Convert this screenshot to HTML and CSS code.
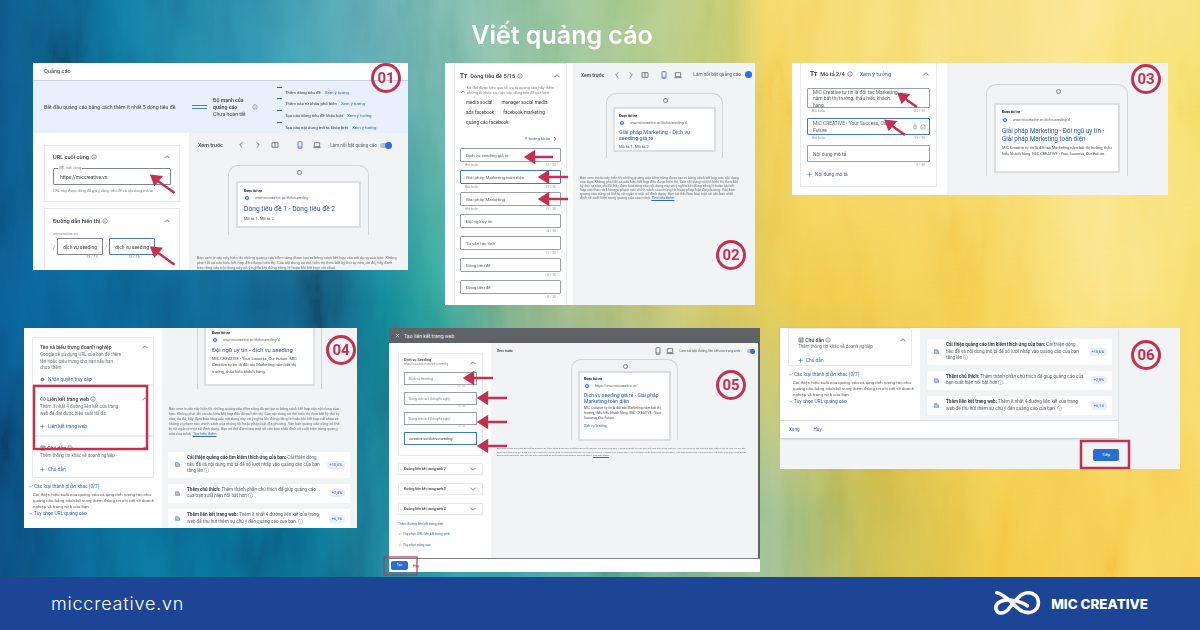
FILE: index.html
```html
<!DOCTYPE html>
<html lang="vi">
<head>
    <meta charset="UTF-8">
    <meta name="viewport" content="width=device-width, initial-scale=1.0">
    <title>Viết quảng cáo</title>
    <link rel="stylesheet" href="styles.css">
</head>
<body>
    <!-- icon sprite -->
    <svg class="sprite" aria-hidden="true">
        <symbol id="up" viewBox="0 0 12 12"><path d="M2 8l4-4 4 4" fill="none" stroke="currentColor" stroke-width="1.2"/></symbol>
        <symbol id="down" viewBox="0 0 12 12"><path d="M2 4l4 4 4-4" fill="none" stroke="currentColor" stroke-width="1.2"/></symbol>
        <symbol id="left" viewBox="0 0 12 12"><path d="M8 2L4 6l4 4" fill="none" stroke="currentColor" stroke-width="1.2"/></symbol>
        <symbol id="right" viewBox="0 0 12 12"><path d="M4 2l4 4-4 4" fill="none" stroke="currentColor" stroke-width="1.2"/></symbol>
        <symbol id="split" viewBox="0 0 12 12"><path d="M1.5 2.5h9v7h-9zM6 2.5v7" fill="none" stroke="currentColor" stroke-width="1.2"/></symbol>
        <symbol id="phone" viewBox="0 0 12 12"><rect x="3" y="1" width="6" height="10" rx="1" fill="none" stroke="currentColor" stroke-width="1.2"/><path d="M3 9h6" stroke="currentColor"/></symbol>
        <symbol id="laptop" viewBox="0 0 12 12"><path d="M2 2.5h8v6H2zM.5 10h11" fill="none" stroke="currentColor" stroke-width="1.2"/></symbol>
        <symbol id="info" viewBox="0 0 12 12"><circle cx="6" cy="6" r="4.5" fill="none" stroke="currentColor"/><path d="M6 5.500v3M6 3.500v1" stroke="currentColor"/></symbol>
        <symbol id="plus" viewBox="0 0 12 12"><path d="M6 1v10M1 6h10" stroke="currentColor" stroke-width="1.400"/></symbol>
        <symbol id="globe" viewBox="0 0 12 12"><circle cx="6" cy="6" r="5.500" fill="#d2e3fc"/><circle cx="6" cy="6" r="3" fill="none" stroke="#1a56b8" stroke-width="1.600"/></symbol>
        <symbol id="doc" viewBox="0 0 12 12"><path d="M2 2h8v8H2z" fill="none" stroke="currentColor" stroke-width="1.200"/><path d="M3.500 4.500h5M3.500 6.500h5M3.500 8.500h3" stroke="currentColor"/></symbol>
        <symbol id="mark" viewBox="0 0 12 12"><path d="M2 2h5l3 3v5H2z" fill="#7a9bd4"/><path d="M3.500 5h4M3.500 7h5" stroke="#fff"/></symbol>
        <symbol id="link" viewBox="0 0 12 12"><path d="M5 3.500H3a2.500 2.500 0 000 5h2M7 3.500h2a2.500 2.500 0 010 5H7M4 6h4" fill="none" stroke="currentColor" stroke-width="1.200"/></symbol>
        <symbol id="clip" viewBox="0 0 12 12"><path d="M4 2h4v8H4z" fill="none" stroke="currentColor"/></symbol>
    </svg>

    <div class="poster">
        <!-- watercolor grain over the gradients -->
        <svg class="wash" aria-hidden="true">
            <filter id="grain" x="0" y="0" width="100%" height="100%">
                <feTurbulence type="fractalNoise" baseFrequency="0.02 0.006" numOctaves="5" seed="11"/>
                <feColorMatrix values="1.6 0 0 0 -0.3  1.6 0 0 0 -0.3  1.6 0 0 0 -0.3  0 0 0 0 1"/>
            </filter>
            <rect width="1200" height="630" filter="url(#grain)"/>
        </svg>

        <h1 class="poster-title">Viết quảng cáo</h1>

        <div class="row row-top">
            <!-- 01 -->
            <section class="panel p1">
                <div class="p1-head">Quảng cáo</div>
                <div class="p1-band">
                    <div class="band-text">Bắt đầu quảng cáo bằng cách thêm ít nhất 5 dòng tiêu đề</div>
                    <div class="gauge"><i></i><i></i></div>
                    <div class="band-strength"><b>Độ mạnh của quảng cáo</b>Chưa hoàn tất</div>
                    <svg class="ic info-ic"><use href="#info"/></svg>
                    <ul class="band-tips">
                        <li>Thêm dòng tiêu đề <a>Xem ý tưởng</a></li>
                        <li>Thêm các từ khóa phổ biến <a>Xem ý tưởng</a></li>
                        <li>Tạo các dòng tiêu đề khác biệt <a>Xem ý tưởng</a></li>
                        <li>Tạo các nội dung mô tả khác biệt <a>Xem ý tưởng</a></li>
                    </ul>
                </div>
                <div class="split p1-split">
                    <div class="col-left">
                        <div class="card p1-url">
                            <div class="card-title">URL cuối cùng <svg class="ic"><use href="#info"/></svg><svg class="ic chev"><use href="#up"/></svg></div>
                            <div class="field field-legend"><span class="legend">URL cuối cùng</span>https://miccreative.vn</div>
                            <div class="hint">URL này được dùng để gợi ý dòng tiêu đề và nội dung mô tả</div>
                        </div>
                        <div class="card p1-path">
                            <div class="card-title">Đường dẫn hiển thị <svg class="ic"><use href="#info"/></svg><svg class="ic chev"><use href="#up"/></svg></div>
                            <div class="hint">miccreative.vn</div>
                            <div class="path-row">
                                <span>/</span><div class="field">dịch vụ seeding</div>
                                <span>/</span><div class="field field-on">dịch vụ seeding</div>
                            </div>
                            <div class="path-count"><span>13 / 15</span><span>13 / 15</span></div>
                        </div>
                    </div>
                    <div class="col-right">
                        <div class="toolbar">
                            <b>Xem trước</b>
                            <svg class="ic-lg"><use href="#left"/></svg>
                            <svg class="ic-lg"><use href="#right"/></svg>
                            <svg class="ic-lg"><use href="#split"/></svg>
                            <svg class="ic-lg blue"><use href="#phone"/></svg>
                            <svg class="ic-lg"><use href="#laptop"/></svg>
                            <span class="toolbar-label">Làm nổi bật quảng cáo</span>
                            <span class="toggle"></span>
                        </div>
                        <div class="phone p1-phone">
                            <div class="ad">
                                <div class="ad-sponsor">Được tài trợ</div>
                                <div class="ad-url"><svg class="ad-globe"><use href="#globe"/></svg>www.miccreative.vn/dichvuseeding</div>
                                <div class="ad-title">Dòng tiêu đề 1 - Dòng tiêu đề 2</div>
                                <div class="ad-desc">Mô tả 1. Mô tả 2.</div>
                            </div>
                        </div>
                        <p class="fine p1-fine">Bản xem trước này hiển thị những quảng cáo tiềm năng được tạo ra bằng cách kết hợp các nội dung của bạn. Không phải tất cả các kiểu kết hợp đều được hiển thị. Các nội dung có thể hiển thị theo bất kỳ thứ tự nào, do đó, hãy đảm bảo rằng các nội dung này có ý nghĩa khi đứng riêng lẻ hoặc khi kết hợp với nhau.</p>
                    </div>
                </div>
                <div class="badge badge-01">01</div>
                <svg class="marks" viewBox="0 0 376 207">
                    <path d="M142 130L121 115M119 113l9 1-6 7z"/>
                    <path d="M142 202L121 187M119 185l9 1-6 7z"/>
                </svg>
            </section>

            <!-- 02 -->
            <section class="panel p2">
                <div class="split p2-split">
                    <div class="col-left">
                        <div class="card p2-card">
                            <div class="card-title"><span class="tt">Tт</span> Dòng tiêu đề 5/15 <svg class="ic"><use href="#info"/></svg><svg class="ic chev"><use href="#up"/></svg></div>
                            <div class="hint p2-hint"><svg class="ic"><use href="#up"/></svg><span>Để đạt được hiệu quả tối ưu từ quảng cáo, hãy thêm những từ khóa sau vào các dòng tiêu đề của bạn</span></div>
                            <div class="chips">
                                <span>media social</span><span>manager social media</span>
                                <span>ads facebook</span><span>facebook marketing</span>
                                <span>quảng cáo facebook</span>
                            </div>
                            <div class="more">Ý tưởng khác <svg class="ic"><use href="#right"/></svg></div>
                            <div class="inp">Dịch vụ seeding giá rẻ</div>
                            <div class="inp-meta"><span>Bắt buộc</span><span>22 / 30</span></div>
                            <div class="inp inp-on">Giải pháp Marketing toàn diện</div>
                            <div class="inp-meta"><span>Bắt buộc</span><span>29 / 30</span></div>
                            <div class="inp">Giải pháp Marketing</div>
                            <div class="inp-meta"><span>Bắt buộc</span><span>19 / 30</span></div>
                            <div class="inp">Đội ngũ uy tín</div>
                            <div class="inp-meta"><span></span><span>14 / 30</span></div>
                            <div class="inp">Tư vấn tận tình</div>
                            <div class="inp-meta"><span></span><span>15 / 30</span></div>
                            <div class="inp">Dòng tiêu đề</div>
                            <div class="inp-meta"><span></span><span>0 / 30</span></div>
                            <div class="inp">Dòng tiêu đề</div>
                            <div class="inp-meta"><span></span><span>0 / 30</span></div>
                        </div>
                    </div>
                    <div class="col-right">
                        <div class="toolbar p2-toolbar">
                            <b>Xem trước</b>
                            <svg class="ic-lg"><use href="#left"/></svg>
                            <svg class="ic-lg"><use href="#right"/></svg>
                            <svg class="ic-lg"><use href="#split"/></svg>
                            <svg class="ic-lg blue"><use href="#phone"/></svg>
                            <svg class="ic-lg"><use href="#laptop"/></svg>
                            <span class="toolbar-label">Làm nổi bật quảng cáo</span>
                            <span class="toggle"></span>
                        </div>
                        <div class="phone p2-phone">
                            <div class="ad">
                                <div class="ad-sponsor">Được tài trợ</div>
                                <div class="ad-url"><svg class="ad-globe"><use href="#globe"/></svg>www.miccreative.vn/dichvuseeding/d</div>
                                <div class="ad-title">Giải pháp Marketing - Dịch vụ seeding giá rẻ</div>
                                <div class="ad-desc">Mô tả 1. Mô tả 2.</div>
                            </div>
                        </div>
                        <p class="fine p2-fine">Bản xem trước này hiển thị những quảng cáo tiềm năng được tạo ra bằng cách kết hợp các nội dung của bạn. Không phải tất cả các kiểu kết hợp đều được hiển thị. Các nội dung có thể hiển thị theo bất kỳ thứ tự nào, do đó, hãy đảm bảo rằng các nội dung này có ý nghĩa khi đứng riêng lẻ hoặc khi kết hợp với nhau và không vi phạm các chính sách của chúng tôi hoặc pháp luật địa phương. Văn bản quảng cáo cũng có thể bị rút ngắn ở một số định dạng. Bạn có thể đảm bảo một số văn bản nhất định sẽ xuất hiện trong quảng cáo của mình. <a>Tìm hiểu thêm</a></p>
                    </div>
                </div>
                <div class="badge badge-02">02</div>
                <svg class="marks" viewBox="0 0 310 242">
                    <path d="M108 94H84M81 94l8-5v10z"/>
                    <path d="M123 114H98M95 114l8-5v10z"/>
                    <path d="M123 136H98M95 136l8-5v10z"/>
                </svg>
            </section>

            <!-- 03 -->
            <section class="panel p3">
                <div class="split p3-split">
                    <div class="col-left">
                        <div class="card p3-card">
                            <div class="card-title"><span class="tt">Tт</span> Mô tả 2/4 <svg class="ic"><use href="#info"/></svg> <a>Xem ý tưởng</a><svg class="ic chev"><use href="#up"/></svg></div>
                            <div class="inp inp-tall">MIC Creative tự tin là đối tác Marketing nắm bắt thị trường, thấu hiểu khách hàng.</div>
                            <div class="inp-meta"><span>Bắt buộc</span><span>80 / 90</span></div>
                            <div class="inp inp-on inp-wrap"><span class="inp-text">MIC CREATIVE - Your Success, Our Future</span><span class="inp-icons"><svg class="ic"><use href="#clip"/></svg><svg class="ic"><use href="#info"/></svg></span></div>
                            <div class="inp-meta"><span>Bắt buộc</span><span>39 / 90</span></div>
                            <div class="inp inp-empty">Nội dung mô tả</div>
                            <div class="inp-meta"><span></span><span>0 / 90</span></div>
                            <div class="add"><svg class="ic"><use href="#plus"/></svg> Nội dung mô tả</div>
                        </div>
                    </div>
                    <div class="col-right">
                        <div class="phone p3-phone">
                            <div class="ad">
                                <div class="ad-sponsor">Được tài trợ</div>
                                <div class="ad-url"><svg class="ad-globe"><use href="#globe"/></svg>www.miccreative.vn/dichvuseeding/d</div>
                                <div class="ad-title">Giải pháp Marketing - Đội ngũ uy tín - Giải pháp Marketing toàn diện</div>
                                <div class="ad-desc">MIC Creative tự tin là đối tác Marketing nắm bắt thị trường, thấu hiểu khách hàng. MIC CREATIVE - Your Success, Our Future.</div>
                            </div>
                        </div>
                    </div>
                </div>
                <div class="badge badge-03">03</div>
                <svg class="marks" viewBox="0 0 376 132">
                    <path d="M125 44L109 33M107 31l9 1-6 7z"/>
                    <path d="M113 72L96 60M94 58l9 1-6 7z"/>
                </svg>
            </section>
        </div>

        <div class="row row-bottom">
            <!-- 04 -->
            <section class="panel p4">
                <div class="split p4-split">
                    <div class="col-left">
                        <div class="card p4-card">
                            <div class="stack-title"><b>Tên và biểu trưng doanh nghiệp</b><svg class="ic chev"><use href="#up"/></svg></div>
                            <div class="stack-text">Google sẽ sử dụng URL của bạn để thêm tên hoặc biểu trưng cho bạn nếu bạn chưa thêm</div>
                            <div class="add add-access"><svg class="ic"><use href="#globe"/></svg> Nhận quyền truy cập</div>
                        </div>
                        <div class="card p4-card">
                            <div class="stack-title"><b><svg class="ic"><use href="#link"/></svg> Liên kết trang web <svg class="ic"><use href="#info"/></svg></b><svg class="ic chev"><use href="#up"/></svg></div>
                            <div class="stack-text">Thêm ít nhất 4 đường liên kết của trang web để đạt được hiệu suất tối đa</div>
                            <div class="add"><svg class="ic"><use href="#plus"/></svg> Liên kết trang web</div>
                        </div>
                        <div class="card p4-card">
                            <div class="stack-title"><b><svg class="ic"><use href="#doc"/></svg> Chú dẫn <svg class="ic"><use href="#info"/></svg></b><svg class="ic chev"><use href="#up"/></svg></div>
                            <div class="stack-text">Thêm thông tin khác về doanh nghiệp</div>
                            <div class="add"><svg class="ic"><use href="#plus"/></svg> Chú dẫn</div>
                        </div>
                        <div class="more-block">
                            <a class="more-link"><svg class="ic"><use href="#down"/></svg>Các loại thành phần khác (0/7)</a>
                            <p>Cải thiện hiệu suất của quảng cáo và tăng tính tương tác cho quảng cáo bằng cách bổ sung thêm thông tin chi tiết về doanh nghiệp và trang web của bạn</p>
                            <a class="more-link"><svg class="ic"><use href="#down"/></svg>Tùy chọn URL quảng cáo</a>
                        </div>
                    </div>
                    <div class="col-right">
                        <div class="phone phone-cut p4-phone">
                            <div class="ad">
                                <div class="ad-sponsor">Được tài trợ</div>
                                <div class="ad-url"><svg class="ad-globe"><use href="#globe"/></svg>www.miccreative.vn/dichvuseeding/d</div>
                                <div class="ad-title">Đội ngũ uy tín - dịch vụ seeding</div>
                                <div class="ad-desc">MIC CREATIVE - Your Success, Our Future. MIC Creative tự tin là đối tác Marketing nắm bắt thị trường, thấu hiểu khách hàng.</div>
                            </div>
                        </div>
                        <p class="fine p4-fine">Bản xem trước này hiển thị những quảng cáo tiềm năng được tạo ra bằng cách kết hợp các nội dung của bạn. Không phải tất cả các kiểu kết hợp đều được hiển thị. Các nội dung có thể hiển thị theo bất kỳ thứ tự nào, do đó, hãy đảm bảo rằng các nội dung này có ý nghĩa khi đứng riêng lẻ hoặc khi kết hợp với nhau và không vi phạm các chính sách của chúng tôi hoặc pháp luật địa phương. Văn bản quảng cáo cũng có thể bị rút ngắn ở một số định dạng. Bạn có thể đảm bảo một số văn bản nhất định sẽ xuất hiện trong quảng cáo của mình. <a>Tìm hiểu thêm</a></p>
                        <div class="tips p4-tips">
                            <div class="tip"><svg class="ic"><use href="#mark"/></svg><div><b>Cải thiện quảng cáo tìm kiếm thích ứng của bạn:</b> Cải thiện dòng tiêu đề và nội dung mô tả để số lượt nhấp vào quảng cáo của bạn tăng lên ⓘ</div><span class="pill">+10,6%</span></div>
                            <div class="tip"><svg class="ic"><use href="#mark"/></svg><div><b>Thêm chú thích:</b> Thêm thành phần chú thích để giúp quảng cáo của bạn xuất hiện nổi bật hơn ⓘ</div><span class="pill">+2,8%</span></div>
                            <div class="tip"><svg class="ic"><use href="#mark"/></svg><div><b>Thêm liên kết trang web:</b> Thêm ít nhất 4 đường liên kết của trang web để thu hút thêm sự chú ý đến quảng cáo của bạn. ⓘ</div><span class="pill">+6,1%</span></div>
                        </div>
                    </div>
                </div>
                <div class="badge badge-04">04</div>
                <svg class="marks" viewBox="0 0 333 200">
                    <rect x="10" y="58" width="113" height="63"/>
                </svg>
            </section>

            <!-- 05 -->
            <section class="panel p5">
                <div class="p5-head"><svg class="ic"><use href="#plus"/></svg>Tạo liên kết trang web</div>
                <div class="split p5-split">
                    <div class="col-left">
                        <div class="card p5-card">
                            <div class="p5-card-title"><b>Dịch vụ Seeding</b>https://miccreative.vn/dich-vu-seeding<svg class="ic chev"><use href="#up"/></svg></div>
                            <div class="p5-inp">Dịch vụ Seeding</div><div class="p5-count">15 / 25</div>
                            <div class="p5-inp">Dòng mô tả 1 (khuyến nghị)</div><div class="p5-count">0 / 35</div>
                            <div class="p5-inp">Dòng mô tả 2 (khuyến nghị)</div><div class="p5-count">0 / 35</div>
                            <div class="p5-inp p5-inp-on">ccreative.vn/dich-vu-seeding/</div>
                        </div>
                        <div class="card p5-fold"><b>Đường liên kết trang web 2</b><svg class="ic chev"><use href="#down"/></svg></div>
                        <div class="card p5-fold"><b>Đường liên kết trang web 3</b><svg class="ic chev"><use href="#down"/></svg></div>
                        <div class="card p5-fold"><b>Đường liên kết trang web 4</b><svg class="ic chev"><use href="#down"/></svg></div>
                        <div class="p5-links">
                            <a>Thêm đường liên kết trang web</a>
                            <a><svg class="ic"><use href="#down"/></svg>Tùy chọn URL liên kết trang web</a>
                            <a><svg class="ic"><use href="#down"/></svg>Tùy chọn nâng cao</a>
                        </div>
                    </div>
                    <div class="col-right">
                        <div class="toolbar p5-toolbar">
                            <b>Xem trước</b>
                            <svg class="ic-lg"><use href="#phone"/></svg>
                            <svg class="ic-lg"><use href="#laptop"/></svg>
                            <span class="toolbar-label">Làm nổi bật đường liên kết của trang web</span>
                            <span class="toggle"></span>
                        </div>
                        <div class="phone p5-phone">
                            <div class="ad">
                                <div class="ad-sponsor">Được tài trợ</div>
                                <div class="ad-url"><svg class="ad-globe"><use href="#globe"/></svg>https://www.miccreative.vn/</div>
                                <div class="ad-title">Dịch vụ seeding giá rẻ - Giải pháp Marketing toàn diện</div>
                                <div class="ad-desc">MIC Creative tự tin là đối tác Marketing nắm bắt thị trường, thấu hiểu khách hàng. MIC CREATIVE - Your Success, Our Future.</div>
                                <div class="ad-site">Dịch vụ Seeding</div>
                            </div>
                        </div>
                        <p class="fine p5-fine">Bản xem trước này hiển thị những quảng cáo tiềm năng được tạo ra bằng cách kết hợp các nội dung của bạn. Không phải tất cả các kiểu kết hợp đều được hiển thị. Các nội dung có thể hiển thị theo bất kỳ thứ tự nào, do đó, hãy đảm bảo rằng các nội dung này có ý nghĩa khi đứng riêng lẻ hoặc khi kết hợp với nhau và không vi phạm các chính sách của chúng tôi hoặc pháp luật địa phương. Văn bản quảng cáo cũng có thể bị rút ngắn ở một số định dạng. Bạn có thể đảm bảo một số văn bản nhất định sẽ xuất hiện trong quảng cáo của mình. <a>Tìm hiểu thêm</a></p>
                    </div>
                </div>
                <div class="p5-foot"><span class="btn btn-small">Tạo</span><span class="p5-cancel">Hủy</span></div>
                <div class="badge badge-05">05</div>
                <svg class="marks" viewBox="0 0 371 244">
                    <path d="M104 50H79M76 50l8-5v10z"/>
                    <path d="M118 70H93M90 70l8-5v10z"/>
                    <path d="M118 94H93M90 94l8-5v10z"/>
                    <path d="M118 118H93M90 118l8-5v10z"/>
                    <rect class="thin" x="-5" y="229" width="33" height="18"/>
                </svg>
            </section>

            <!-- 06 -->
            <section class="panel p6">
                <div class="p6-sheet">
                    <div class="split p6-split">
                        <div class="col-left">
                            <div class="card p6-card">
                                <div class="stack-title"><b><svg class="ic"><use href="#doc"/></svg> Chú dẫn <svg class="ic"><use href="#info"/></svg></b><svg class="ic chev"><use href="#up"/></svg></div>
                                <div class="stack-text">Thêm thông tin khác về doanh nghiệp</div>
                                <div class="add"><svg class="ic"><use href="#plus"/></svg> Chú dẫn</div>
                            </div>
                            <div class="more-block">
                                <a class="more-link"><svg class="ic"><use href="#down"/></svg>Các loại thành phần khác (0/7)</a>
                                <p>Cải thiện hiệu suất của quảng cáo và tăng tính tương tác cho quảng cáo bằng cách bổ sung thêm thông tin chi tiết về doanh nghiệp và trang web của bạn</p>
                                <a class="more-link"><svg class="ic"><use href="#down"/></svg>Tùy chọn URL quảng cáo</a>
                            </div>
                        </div>
                        <div class="col-right">
                            <div class="tips p6-tips">
                                <div class="tip"><svg class="ic"><use href="#mark"/></svg><div><b>Cải thiện quảng cáo tìm kiếm thích ứng của bạn:</b> Cải thiện dòng tiêu đề và nội dung mô tả để số lượt nhấp vào quảng cáo của bạn tăng lên ⓘ</div><span class="pill">+10,6%</span></div>
                                <div class="tip"><svg class="ic"><use href="#mark"/></svg><div><b>Thêm chú thích:</b> Thêm thành phần chú thích để giúp quảng cáo của bạn xuất hiện nổi bật hơn ⓘ</div><span class="pill">+2,8%</span></div>
                                <div class="tip"><svg class="ic"><use href="#mark"/></svg><div><b>Thêm liên kết trang web:</b> Thêm ít nhất 4 đường liên kết của trang web để thu hút thêm sự chú ý đến quảng cáo của bạn. ⓘ</div><span class="pill">+6,1%</span></div>
                            </div>
                        </div>
                    </div>
                    <div class="p6-foot"><a>Xong</a><a>Hủy</a></div>
                </div>
                <div class="p6-next"><span class="btn">Tiếp</span></div>
                <div class="badge badge-06">06</div>
                <svg class="marks" viewBox="0 0 400 141">
                    <rect x="301" y="113" width="48" height="27"/>
                </svg>
            </section>
        </div>

        <footer class="brand-bar">
            <span class="site">miccreative.vn</span>
            <div class="brand">
                <svg class="brand-logo" viewBox="38 24 148 82">
                    <path d="M50 32C78 38 96 66 120 84C146 102 178 92 178 62C178 36 150 26 130 36C110 46 100 68 84 84C72 96 52 100 47 82C43 64 66 52 90 54C110 56 130 62 144 72" fill="none" stroke="#fff" stroke-width="11" stroke-linecap="round"/>
                </svg>
                <span class="brand-name">MIC CREATIVE</span>
            </div>
        </footer>
    </div>
</body>
</html>
```

FILE: styles.css
```css
* {
    box-sizing: border-box;
}
html, body {
    margin: 0;
    padding: 0;
}
body {
    width: 1200px;
    height: 630px;
    overflow: hidden;
    font-family: Roboto, "Noto Sans", sans-serif;
    color: #3c4043;
}
.sprite {
    display: none;
}
a {
    color: #3367b8;
}

/* poster background: one wash across the middle, faded top and bottom washes */
.poster {
    position: relative;
    width: 1200px;
    height: 630px;
    display: flex;
    flex-direction: column;
    background: linear-gradient(90deg, #0a5a8f 0%, #0c5f90 10%, #155f85 27%, #107a8a 32%, #2a9a92 36%, #8ab488 43%, #c6c470 55%, #f0c948 67%, #f5cf4f 80%, #fbe37c 92%, #f8dc6a 100%);
}
.poster::before,
.poster::after {
    content: "";
    position: absolute;
    left: 0;
    width: 1200px;
    height: 300px;
}
.poster::before {
    top: 0;
    background: linear-gradient(90deg, #0d4f7d 0%, #0e6f97 9%, #2d8aa8 21%, #5aa5b0 30%, #7fbcaa 39%, #9cc48d 50%, #c8cc70 61%, #f6d765 64%, #f8df7c 83%, #fbe68a 92%, #f6e070 100%);
    -webkit-mask-image: linear-gradient(180deg, #000 25%, transparent 100%);
    mask-image: linear-gradient(180deg, #000 25%, transparent 100%);
}
.poster::after {
    top: 300px;
    background: linear-gradient(90deg, #0b4a7b 0%, #0a6a96 9%, #0a6a8c 25%, #3a9aa5 42%, #98bb84 65%, #c8b84a 73%, #f4ca48 83%, #f8d25a 100%);
    -webkit-mask-image: linear-gradient(0deg, #000 30%, transparent 100%);
    mask-image: linear-gradient(0deg, #000 30%, transparent 100%);
}
.poster > * {
    position: relative;
    z-index: 1;
}
.poster > .wash {
    position: absolute;
    left: 0;
    top: 0;
    width: 1200px;
    height: 630px;
    opacity: 0.18;
    mix-blend-mode: overlay;
}
.poster-title {
    margin: 0;
    height: 63px;
    padding: 19px 76px 0 0;
    text-align: center;
    font-family: Inter, sans-serif;
    font-size: 25px;
    line-height: 32px;
    font-weight: 600;
    color: #fff;
}
.row {
    display: flex;
    align-items: flex-start;
}
.row-top {
    height: 265px;
    padding-left: 33px;
    gap: 37px;
}
.row-bottom {
    height: 249px;
    padding-left: 24px;
}
.panel {
    position: relative;
    flex: none;
    background: #f1f3f4;
    display: flex;
    flex-direction: column;
}
.split {
    display: grid;
    flex: 1;
    min-height: 0;
    overflow: hidden;
    filter: blur(0.3px);
}
.col-left {
    background: #fff;
    min-width: 0;
    overflow: hidden;
}
.col-right {
    background: #f1f3f4;
    min-width: 0;
    overflow: hidden;
}

/* overlays */
.badge {
    position: absolute;
    width: 30px;
    height: 30px;
    border: 3px solid #c4304f;
    border-radius: 50%;
    font-size: 15px;
    line-height: 24px;
    font-weight: 700;
    text-align: center;
    color: #c4304f;
}
.badge-01 { left: 338px; top: 0; }
.badge-02 { left: 271px; top: 177px; }
.badge-03 { left: 339px; top: 1px; }
.badge-04 { left: 302px; top: 7px; }
.badge-05 { left: 327px; top: 42px; }
.badge-06 { left: 351px; top: 12px; }
.marks {
    position: absolute;
    inset: 0;
    width: 100%;
    height: 100%;
    overflow: visible;
    pointer-events: none;
}
.marks path {
    fill: #c4304f;
    stroke: #c4304f;
    stroke-width: 2.4;
}
.marks rect {
    fill: none;
    stroke: #c4304f;
    stroke-width: 2.5;
}
.marks rect.thin {
    stroke-width: 1.2;
}

/* shared bits */
.ic {
    width: 6px;
    height: 6px;
    flex: none;
    vertical-align: -1px;
}
.ic-lg {
    width: 8px;
    height: 8px;
    flex: none;
    color: #5f6368;
}
.blue {
    color: #3367d6;
}
.tt {
    font-size: 6.500px;
    font-weight: 700;
    margin-right: 1px;
}
.card {
    background: #fff;
    border: 1px solid #e8eaed;
    border-radius: 1px;
}
.card-title {
    display: flex;
    align-items: center;
    gap: 2px;
    font-size: 5.600px;
    font-weight: 500;
    color: #3c4043;
}
.card-title a {
    margin-left: 5px;
    font-weight: 400;
}
.chev {
    margin-left: auto;
    width: 8px;
    height: 8px;
    color: #5f6368;
}
.hint {
    font-size: 3.800px;
    line-height: 5px;
    color: #80868b;
}
.toolbar {
    display: flex;
    align-items: center;
    font-size: 4.600px;
    color: #5f6368;
    white-space: nowrap;
}
.toolbar b {
    font-size: 5.400px;
    font-weight: 500;
    color: #3c4043;
}
.toolbar-label {
    margin-left: 7px;
}
.toggle {
    position: relative;
    width: 12px;
    height: 5px;
    margin-left: 3px;
    border-radius: 3px;
    background: #a8c2f0;
}
.toggle::after {
    content: "";
    position: absolute;
    right: 0;
    top: -1px;
    width: 7px;
    height: 7px;
    border-radius: 50%;
    background: #2f6fd8;
}
.phone {
    background: #f1f3f4;
    border: 1.2px solid #d0d3d6;
    border-bottom: 0;
    border-radius: 10px 10px 0 0;
    padding: 14px 7px 0;
    position: relative;
}
.phone::before {
    content: "";
    position: absolute;
    top: 4px;
    left: 50%;
    width: 3px;
    height: 3px;
    margin-left: -1.5px;
    border: 0.6px solid #80868b;
    border-radius: 50%;
}
.phone-cut {
    border-top: 0;
    border-radius: 0;
    padding-top: 0;
}
.phone-cut::before {
    display: none;
}
.ad {
    background: #fff;
    border: 2px solid #dcdee0;
    padding: 6px 6px 4px;
}
.ad-sponsor {
    font-size: 3.400px;
    font-weight: 700;
    color: #202124;
}
.ad-url {
    display: flex;
    align-items: center;
    gap: 5px;
    margin: 2px 0 3px;
    font-size: 3.400px;
    color: #5f6368;
}
.ad-globe {
    width: 6px;
    height: 6px;
    flex: none;
}
.ad-title {
    font-size: 6.400px;
    line-height: 8px;
    color: #2a5aa8;
}
.ad-desc {
    margin-top: 2px;
    font-size: 4.100px;
    line-height: 6.400px;
    color: #4d5156;
}
.ad-site {
    margin-top: 3px;
    font-size: 4px;
    color: #2a5aa8;
}
.fine {
    margin: 0;
    font-size: 3.300px;
    line-height: 4.700px;
    color: #70757a;
}
.fine a {
    text-decoration: underline;
}
.inp {
    height: 14px;
    padding: 0 5px;
    display: flex;
    align-items: center;
    border: 0.8px solid #9aa0a6;
    border-radius: 1px;
    font-size: 4.400px;
    color: #5f6368;
}
.inp-on {
    border-color: #3c7ac9;
}
.inp-meta {
    display: flex;
    justify-content: space-between;
    height: 8px;
    padding: 1px 5px 0;
    font-size: 3.400px;
    color: #9aa0a6;
}
.add {
    display: flex;
    align-items: center;
    gap: 3px;
    font-size: 4.800px;
    color: #3367b8;
}
.add .ic {
    width: 5px;
    height: 5px;
}
.btn {
    display: inline-block;
    background: #2a6dd4;
    border-radius: 2px;
    color: #fff;
    text-align: center;
}

/* stack cards in 04 and 06 */
.stack-title {
    display: flex;
    align-items: center;
    font-size: 5.100px;
    color: #3c4043;
}
.stack-title b {
    font-weight: 500;
}
.stack-text {
    margin-top: 1px;
    padding-right: 27px;
    font-size: 4.500px;
    line-height: 6.700px;
    color: #70757a;
}
.more-block {
    margin: 5px 6px 0 4px;
}
.more-block p {
    margin: 3px 0 2px 5px;
    font-size: 4.400px;
    line-height: 5.800px;
    color: #5f6368;
}
.more-link {
    display: flex;
    align-items: center;
    gap: 1px;
    font-size: 4.800px;
}
.more-link .ic {
    width: 5px;
    height: 5px;
}
.tips {
    display: flex;
    flex-direction: column;
}
.tip {
    display: grid;
    grid-template-columns: 7px 1fr auto;
    gap: 6px;
    align-items: center;
    padding: 3px 5px 3px 6px;
    background: #fff;
    border-radius: 1px;
    font-size: 4.600px;
    line-height: 6.600px;
    color: #5f6368;
}
.tip b {
    font-weight: 700;
    color: #3c4043;
}
.tip .ic {
    width: 7px;
    height: 7px;
}
.pill {
    padding: 1px 3px;
    border-radius: 5px;
    background: #e8f0fe;
    color: #3367b8;
    font-size: 3.900px;
    line-height: 6px;
}

/* 01 */
.p1 {
    width: 375px;
    height: 207px;
    background: #fff;
}
.p1-head {
    height: 18px;
    padding: 0 11px;
    line-height: 17px;
    font-size: 5.600px;
    border-bottom: 1px solid #c9d3e0;
    filter: blur(0.3px);
}
.p1-band {
    height: 52px;
    display: flex;
    align-items: center;
    padding-left: 11px;
    background: #e8f0fb;
    font-size: 5.200px;
    filter: blur(0.3px);
}
.band-text {
    width: 148px;
    white-space: nowrap;
}
.gauge {
    width: 15px;
    margin-right: 6px;
}
.gauge i {
    display: block;
    height: 1px;
    margin: 2px 0;
    background: #4a7ec8;
}
.band-strength {
    width: 39px;
    line-height: 7px;
}
.band-strength b {
    display: block;
    font-weight: 500;
}
.info-ic {
    margin-right: 28px;
    color: #5f6368;
}
.band-tips {
    margin: 0;
    padding: 0;
    list-style: none;
    font-size: 4.300px;
}
.band-tips li {
    height: 11.700px;
    padding-top: 3px;
    white-space: nowrap;
}
.band-tips li::before {
    content: "";
    display: inline-block;
    width: 5px;
    height: 1px;
    margin: 0 3px 6px -9px;
    background: #3367b8;
}
.band-tips a {
    margin-left: 3px;
}
.p1-split {
    grid-template-columns: 156px 1fr;
}
.p1-split .col-left {
    padding: 12px 9px 0 11px;
}
.p1-url {
    height: 57px;
    padding: 7px 8px;
    margin-bottom: 6px;
}
.field {
    flex: 1;
    height: 13px;
    padding: 0 6px;
    display: flex;
    align-items: center;
    border: 0.8px solid #80868b;
    border-radius: 1px;
    font-size: 4.900px;
    white-space: nowrap;
    overflow: hidden;
}
.field-legend {
    position: relative;
    height: 17px;
    margin: 7px 0 3px;
    overflow: visible;
}
.legend {
    position: absolute;
    left: 4px;
    top: -3px;
    padding: 0 1px;
    background: #fff;
    font-size: 3.400px;
    color: #80868b;
}
.field-on {
    border-color: #3c7ac9;
}
.p1-path {
    height: 70px;
    padding: 8px 8px;
}
.p1-path .hint {
    margin-top: 6px;
}
.path-row {
    display: flex;
    align-items: center;
    gap: 2px;
    width: 102px;
    margin-top: 2px;
    font-size: 5px;
    color: #80868b;
}
.path-row .field {
    flex: none;
    width: 46px;
    height: 17px;
    justify-content: center;
    padding: 0 2px;
    color: #3c4043;
}
.path-count {
    display: flex;
    justify-content: space-around;
    width: 102px;
    padding-left: 18px;
    font-size: 3.600px;
    color: #80868b;
}
.p1 .toolbar {
    gap: 9px;
    padding: 5px 3px 0 9px;
    height: 19px;
}
.p1 .toolbar b {
    margin-right: 5px;
}
.p1 .toolbar .ic-lg:nth-of-type(4) {
    margin-left: 8px;
}
.p1 .toolbar-label {
    margin-left: 0;
}
.p1 .toggle {
    margin-left: -6px;
}
.p1-phone {
    width: 141px;
    height: 70px;
    margin: 13px 0 0 39px;
    padding-top: 15px;
}
.p1-phone .ad-title {
    font-size: 6.700px;
    margin-top: 4px;
}
.p1-phone .ad-desc {
    margin-top: 3px;
}
.p1-fine {
    margin: 20px 10px 0 8px;
    font-size: 3.900px;
    line-height: 5.200px;
}

/* 02 */
.p2 {
    width: 310px;
    height: 242px;
}
.p2-split {
    grid-template-columns: 128px 1fr;
}
.p2-card {
    margin-left: 9px;
    width: 113px;
    height: 250px;
    padding: 8px 5px 0;
}
.p2-hint {
    display: flex;
    align-items: center;
    gap: 1px;
    margin-top: 5px;
}
.p2-hint .ic {
    margin-top: 3px;
}
.chips {
    display: flex;
    flex-wrap: wrap;
    gap: 3px 9px;
    margin: 4px 0 7px 6px;
    font-size: 4.700px;
    line-height: 7px;
}
.more {
    display: flex;
    align-items: center;
    justify-content: flex-end;
    gap: 2px;
    height: 11px;
    margin-bottom: 4px;
    padding-right: 3px;
    font-size: 4.300px;
    color: #3367b8;
}
.p2-toolbar {
    gap: 6px;
    padding: 7px 3px 0 8px;
    height: 16px;
    font-size: 4.700px;
}
.p2-toolbar b {
    font-size: 5px;
    margin-right: 3px;
}
.p2-toolbar .toolbar-label {
    margin-left: 5px;
}
.p2-toolbar .ic-lg:nth-of-type(4) {
    margin-left: 5px;
}
.p2-toolbar .toggle {
    margin-left: -2px;
}
.p2-phone {
    width: 117px;
    height: 65px;
    margin: 14px 0 0 33px;
    padding: 13px 6px 0;
}
.p2-phone .ad {
    padding: 5px 4px 0;
}
.p2-phone .ad-title {
    font-size: 5.500px;
    line-height: 6.400px;
}
.p2-fine {
    margin: 18px 15px 0 7px;
    font-size: 3.600px;
    line-height: 4px;
}

/* 03 */
.p3 {
    width: 376px;
    height: 132px;
}
.p3-split {
    grid-template-columns: 155px 1fr;
}
.p3-card {
    margin-left: 8px;
    width: 137px;
    height: 124px;
    padding: 7px 6px 0;
    border-top: 0;
}
.p3-card .card-title {
    margin-left: 3px;
    margin-bottom: 10px;
}
.p3-card .inp {
    font-size: 4.900px;
}
.inp-tall {
    height: 20px;
    line-height: 6.400px;
    overflow: hidden;
    align-items: flex-start;
    padding-right: 26px;
}
.inp-wrap {
    height: 17px;
    line-height: 6.400px;
    padding-right: 3px;
}
.inp-text {
    width: 88px;
}
.inp-icons {
    display: flex;
    flex: none;
    gap: 2px;
    margin-left: auto;
}
.inp-empty {
    height: 17px;
}
.p3 .inp-meta {
    height: 10px;
}
.p3-card .add {
    margin-top: 0;
}
.p3-phone {
    width: 142px;
    height: 92px;
    margin: 21px 0 0 39px;
    padding: 18px 7px 0;
}
.p3-phone .ad {
    height: 70px;
    padding: 5px 3px 0 6px;
}
.p3-phone .ad-url {
    margin: 3px 0 4px;
}
.p3-phone .ad-title {
    font-size: 6.300px;
}
.p3-phone .ad-desc {
    font-size: 3.900px;
}

/* 04 */
.p4 {
    width: 333px;
    height: 200px;
}
.p4-split {
    grid-template-columns: 138px 1fr;
}
.p4 .col-left {
    padding-top: 9px;
}
.p4-card {
    width: 122px;
    margin-left: 8px;
    padding: 5px 4px 0 7px;
}
.p4-card:nth-child(1) {
    height: 48px;
}
.p4-card:nth-child(2) {
    height: 51px;
    padding-top: 9px;
}
.p4-card:nth-child(3) {
    height: 42px;
    padding-top: 7px;
}
.p4-card .add {
    margin-top: 7px;
}
.p4-card .add-access {
    margin-top: 5px;
}
.p4 .more-block {
    margin-top: 6px;
}
.p4-phone {
    width: 125px;
    height: 61px;
    margin-left: 35px;
    padding: 0 6px;
}
.p4-phone .ad {
    height: 58px;
    border-top: 0;
    padding-top: 3px;
}
.p4-phone .ad-title {
    font-size: 5.900px;
    margin-top: 3px;
}
.p4-fine {
    margin: 18px 15px 0 7px;
    font-size: 3.700px;
    line-height: 5px;
}
.p4-tips {
    margin: 15px 7px 0 6px;
    gap: 6px;
}

/* 05 */
.p5 {
    width: 371px;
    height: 244px;
    margin-left: 32px;
    background: #fff;
}
.p5-head {
    height: 15px;
    display: flex;
    align-items: center;
    gap: 4px;
    padding-left: 6px;
    background: #5f6368;
    color: #e8eaed;
    font-size: 5.200px;
}
.p5-head .ic {
    transform: rotate(45deg);
    width: 5px;
    height: 5px;
}
.p5-split {
    grid-template-columns: 102px 1fr;
    height: 215px;
    flex: none;
}
.p5-card {
    width: 85px;
    height: 103px;
    margin: 10px 0 7px 9px;
    padding: 4px 5px 0;
}
.p5-card-title {
    position: relative;
    height: 13px;
    margin-bottom: 1px;
    font-size: 2.600px;
    line-height: 3px;
    color: #80868b;
}
.p5-card-title b {
    display: block;
    font-size: 3.800px;
    line-height: 4.500px;
    font-weight: 500;
    color: #3c4043;
}
.p5-card-title .chev {
    position: absolute;
    right: 0;
    top: 1px;
}
.p5-inp {
    height: 13px;
    padding: 0 4px;
    display: flex;
    align-items: center;
    border: 0.8px solid #9aa0a6;
    font-size: 3.400px;
    color: #80868b;
}
.p5-inp-on {
    margin-top: 0;
    border-color: #3c7ac9;
    color: #3c4043;
    white-space: nowrap;
    overflow: hidden;
}
.p5-count {
    height: 7px;
    padding-right: 12px;
    text-align: right;
    font-size: 2.600px;
    color: #9aa0a6;
}
.p5-fold {
    display: flex;
    align-items: center;
    width: 85px;
    height: 12px;
    margin: 0 0 8px 9px;
    padding: 0 5px;
    font-size: 3.500px;
}
.p5-fold b {
    font-weight: 500;
}
.p5-links {
    margin: -4px 0 0 9px;
    font-size: 3.300px;
}
.p5-links a {
    display: flex;
    align-items: center;
    height: 10.300px;
    gap: 1px;
}
.p5-links .ic {
    width: 4px;
    height: 4px;
}
.p5 .col-right {
    border-right: 2px solid #5f6368;
}
.p5-toolbar {
    height: 13px;
    gap: 4px;
    padding: 3px 3px 0 6px;
    font-size: 3.300px;
}
.p5-toolbar b {
    font-size: 3.400px;
    margin-right: auto;
}
.p5-toolbar .toolbar-label {
    margin-left: 2px;
}
.p5-toolbar .toggle {
    width: 8px;
    height: 4px;
}
.p5-toolbar .toggle::after {
    width: 5px;
    height: 5px;
    top: -0.5px;
}
.p5-phone {
    width: 107px;
    height: 81px;
    margin: 3px 0 0 80px;
    padding: 11px 6px 0;
}
.p5-phone .ad {
    height: 70px;
    padding: 4px 4px 0;
}
.p5-phone .ad-title {
    font-size: 5.100px;
    line-height: 6px;
    margin-top: 1px;
}
.p5-phone .ad-desc {
    font-size: 3.400px;
    line-height: 5px;
}
.p5-phone .ad-site {
    font-size: 3.200px;
}
.p5-fine {
    margin: 7px 8px 0 6px;
    font-size: 2.500px;
    line-height: 3.600px;
}
.p5-foot {
    flex: 1;
    display: flex;
    align-items: center;
    gap: 5px;
    padding-left: 2px;
    border-top: 1.200px solid #7b7f84;
    font-size: 3.600px;
}
.btn-small {
    width: 17px;
    height: 9px;
    font-size: 3.200px;
    line-height: 9px;
}

/* 06 */
.p6 {
    width: 400px;
    height: 141px;
    margin-left: 20px;
}
.p6-sheet {
    width: 338px;
    height: 110px;
    display: flex;
    flex-direction: column;
    background: #fff;
    box-shadow: 0 1px 2px rgba(60,64,67,0.25);
}
.p6-split {
    grid-template-columns: 140px 1fr;
    height: 93px;
    flex: none;
    border-bottom: 1px solid #dadce0;
}
.p6-card {
    width: 124px;
    height: 38px;
    margin-left: 8px;
    padding: 7px 4px 0 9px;
}
.p6-card .add {
    margin-top: 7px;
}
.p6-card .stack-text {
    margin-top: 0;
}
.p6 .more-block {
    margin: 6px 4px 0 8px;
}
.p6-tips {
    margin: 11px 6px 0 7px;
    gap: 6px;
}
.p6-foot {
    display: flex;
    align-items: center;
    gap: 14px;
    flex: 1;
    padding-left: 9px;
    font-size: 4.600px;
    filter: blur(0.3px);
}
.p6-next {
    display: flex;
    justify-content: flex-end;
    width: 339px;
    padding-top: 11px;
}
.p6-next .btn {
    width: 26px;
    height: 12px;
    font-size: 4.400px;
    line-height: 12px;
}

/* footer */
.brand-bar {
    flex: 1;
    display: flex;
    align-items: center;
    justify-content: space-between;
    padding: 0 52px 0 51px;
    background: #1d4595;
    color: #fff;
}
.site {
    font-family: Inter, sans-serif;
    font-size: 18px;
    font-weight: 300;
    letter-spacing: 0.8px;
}
.brand {
    display: flex;
    align-items: center;
    gap: 10px;
}
.brand-logo {
    width: 48px;
    height: 27px;
}
.brand-name {
    font-family: Inter, sans-serif;
    font-size: 13.400px;
    font-weight: 800;
}
```
